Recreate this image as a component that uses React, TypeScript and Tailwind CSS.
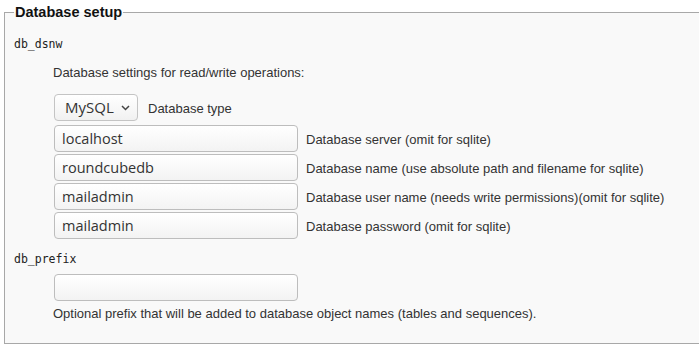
import React from 'react';

const sans = "font-['Liberation_Sans',Arial,sans-serif]";
const inputFont = "font-['Open_Sans','DejaVu_Sans',sans-serif]";

const fields = [
    { value: 'localhost', label: 'Database server (omit for sqlite)' },
    { value: 'roundcubedb', label: 'Database name (use absolute path and filename for sqlite)' },
    { value: 'mailadmin', label: 'Database user name (needs write permissions)(omit for sqlite)' },
    { value: 'mailadmin', label: 'Database password (omit for sqlite)' },
];

const inputCls =
    'w-[244px] h-[27px] px-[7px] border border-[#bdbdbd] rounded-[4px] bg-gradient-to-b from-white to-[#f3f3f3] text-[14.5px] text-[#333] outline-none ' +
    inputFont;

const App: React.FC = () => {
    return (
        <div className="w-[699px] h-[348px] bg-white overflow-hidden">
            <fieldset className="ml-[4px] w-[720px] h-[344px] border border-[#a8a8a8] bg-[#f9f9f9] px-[9px] pb-0">
                <legend className={`px-[1px] text-[14.5px] leading-[24px] font-bold text-[#111] ${sans}`}>
                    Database setup
                </legend>

                <div className="mt-[10px] h-[20px] leading-[20px] font-['DejaVu_Sans_Mono',monospace] text-[11.5px] text-[#222]">
                    db_dsnw
                </div>

                <div className={`mt-[10px] ml-[39px] leading-[18px] text-[13px] text-[#333] ${sans}`}>
                    Database settings for read/write operations:
                </div>

                <div className="mt-[12px] ml-[40px] flex items-center">
                    <div
                        className={`h-[27px] w-[84px] flex items-center justify-between pl-[10px] pr-[7px] border border-[#c4c4c4] rounded-[4px] bg-gradient-to-b from-white to-[#f1f1f1] text-[15px] text-[#333] ${inputFont}`}
                    >
                        <span>MySQL</span>
                        <svg width="9" height="6" viewBox="0 0 9 6" fill="none">
                            <path d="M1 1l3.5 3.5L8 1" stroke="#444" strokeWidth="1.5" />
                        </svg>
                    </div>
                    <span className={`ml-[10px] pt-[2px] text-[13px] text-[#333] ${sans}`}>Database type</span>
                </div>

                <div className="mt-[4px] ml-[40px] flex flex-col gap-[2px]">
                    {fields.map((f, i) => (
                        <div key={i} className="flex items-center">
                            <input readOnly value={f.value} className={inputCls} />
                            <span className={`ml-[8px] pt-[2px] text-[13px] text-[#333] ${sans}`}>{f.label}</span>
                        </div>
                    ))}
                </div>

                <div className="mt-[10px] h-[20px] leading-[20px] font-['DejaVu_Sans_Mono',monospace] text-[11.5px] text-[#222]">
                    db_prefix
                </div>

                <div className="mt-[5px] ml-[40px]">
                    <input readOnly value="" className={inputCls} />
                </div>

                <div className={`mt-[4px] ml-[39px] leading-[18px] text-[13px] text-[#333] ${sans}`}>
                    Optional prefix that will be added to database object names (tables and sequences).
                </div>
            </fieldset>
        </div>
    );
};

export default App;
